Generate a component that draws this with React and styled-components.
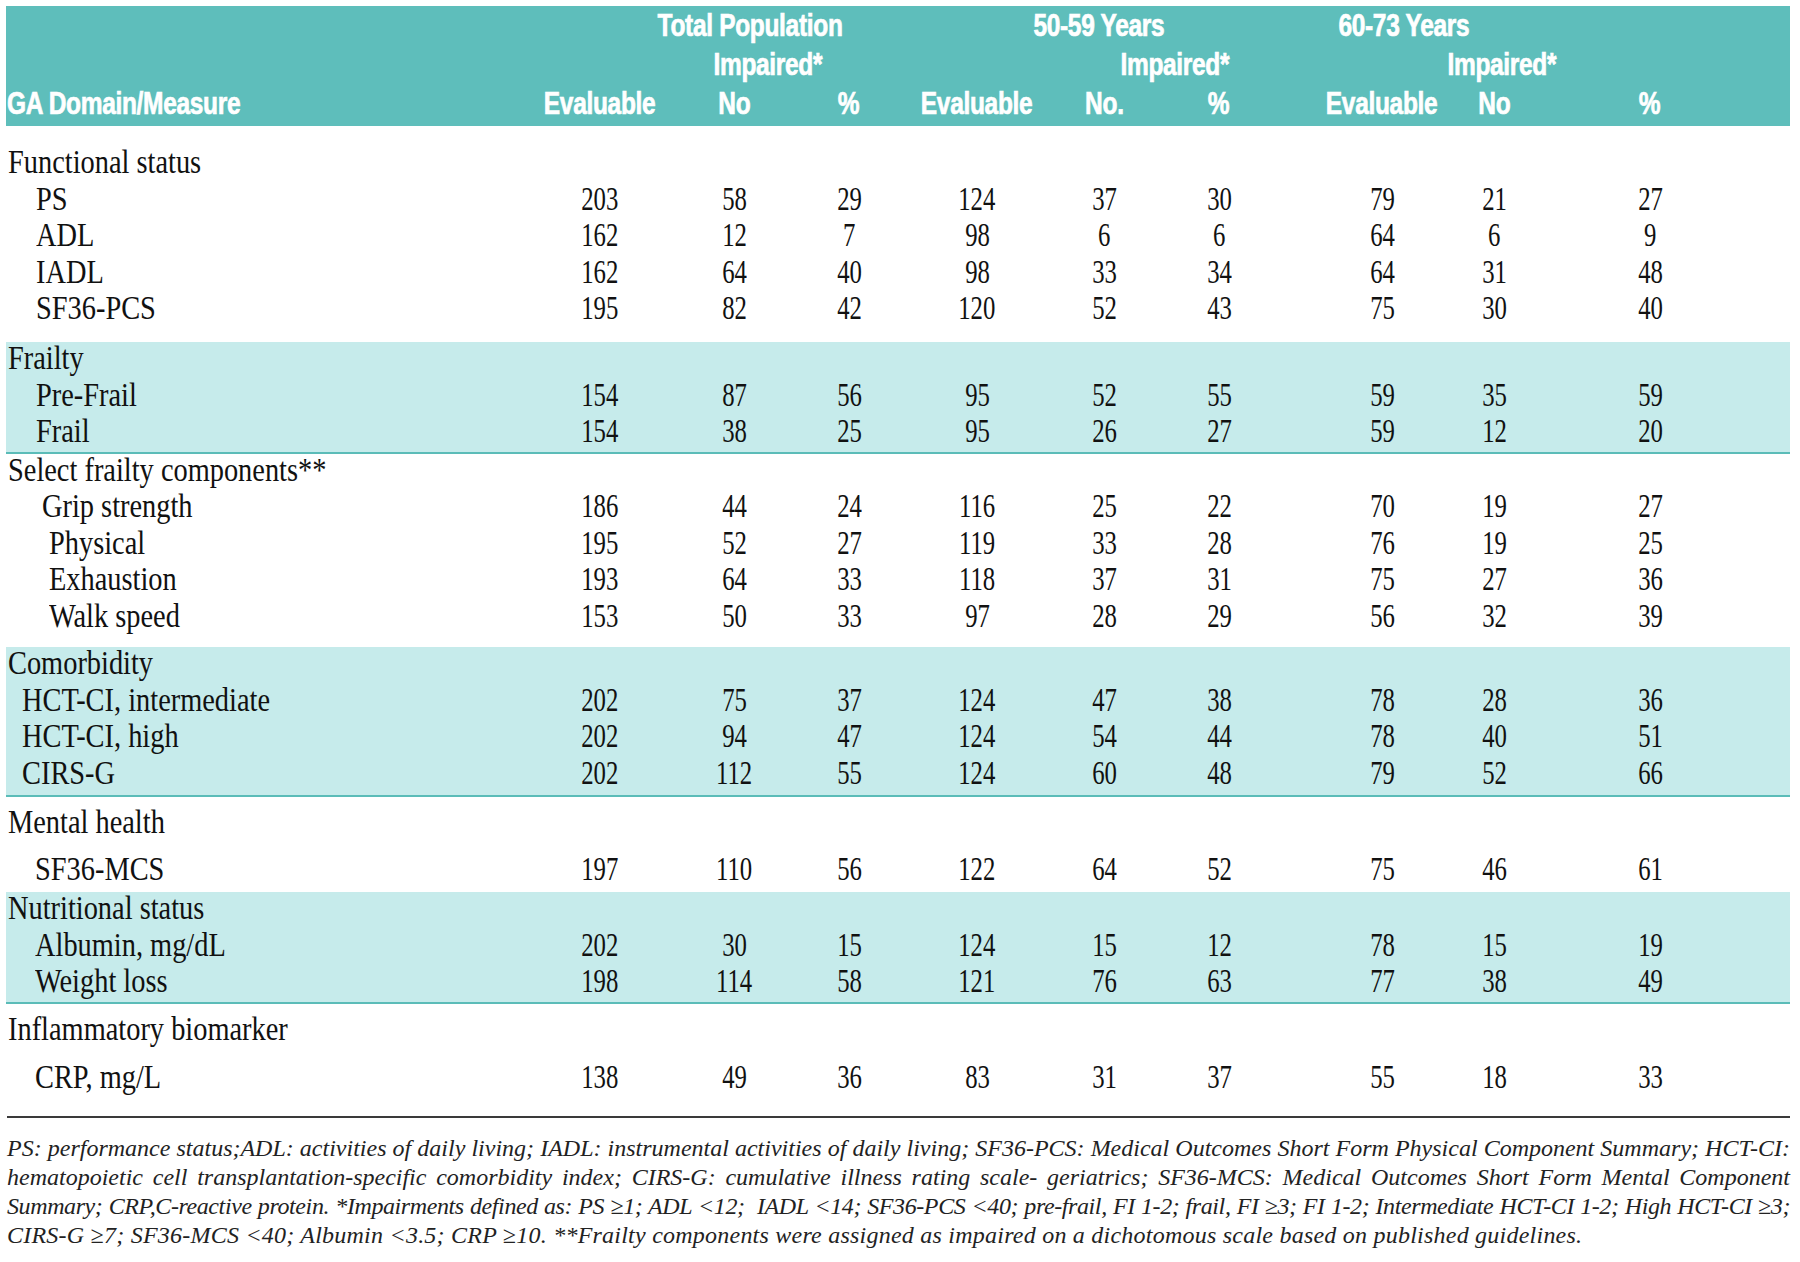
import React from "react";
import styled, { createGlobalStyle } from "styled-components";

const GlobalStyle = createGlobalStyle`
  html, body {
    margin: 0;
    padding: 0;
    background: #ffffff;
  }
`;

// column tracks chosen so each numeric column is centred where the printed table has it
const COLS = "534px 120px 148px 82px 174px 80px 150px 176px 48px 264px 1fr";

const groups = [
  {
    title: "Functional status",
    pt: 20,
    pb: 13.5,
    rows: [
      ["PS", 30, [203, 58, 29, 124, 37, 30, 79, 21, 27]],
      ["ADL", 30, [162, 12, 7, 98, 6, 6, 64, 6, 9]],
      ["IADL", 30, [162, 64, 40, 98, 33, 34, 64, 31, 48]],
      ["SF36-PCS", 30, [195, 82, 42, 120, 52, 43, 75, 30, 40]],
    ],
  },
  {
    title: "Frailty",
    band: true,
    rows: [
      ["Pre-Frail", 30, [154, 87, 56, 95, 52, 55, 59, 35, 59]],
      ["Frail", 30, [154, 38, 25, 95, 26, 27, 59, 12, 20]],
    ],
  },
  {
    title: "Select frailty components**",
    pb: 11,
    rows: [
      ["Grip strength", 36, [186, 44, 24, 116, 25, 22, 70, 19, 27]],
      ["Physical", 43, [195, 52, 27, 119, 33, 28, 76, 19, 25]],
      ["Exhaustion", 43, [193, 64, 33, 118, 37, 31, 75, 27, 36]],
      ["Walk speed", 43, [153, 50, 33, 97, 28, 29, 56, 32, 39]],
    ],
  },
  {
    title: "Comorbidity",
    band: true,
    pb: 2,
    rows: [
      ["HCT-CI, intermediate", 16, [202, 75, 37, 124, 47, 38, 78, 28, 36]],
      ["HCT-CI, high", 16, [202, 94, 47, 124, 54, 44, 78, 40, 51]],
      ["CIRS-G", 16, [202, 112, 55, 124, 60, 48, 79, 52, 66]],
    ],
  },
  {
    title: "Mental health",
    pt: 9,
    pb: 2.5,
    gap: 10.5,
    rows: [["SF36-MCS", 29, [197, 110, 56, 122, 64, 52, 75, 46, 61]]],
  },
  {
    title: "Nutritional status",
    band: true,
    rows: [
      ["Albumin, mg/dL", 29, [202, 30, 15, 124, 15, 12, 78, 15, 19]],
      ["Weight loss", 29, [198, 114, 58, 121, 76, 63, 77, 38, 49]],
    ],
  },
  {
    title: "Inflammatory biomarker",
    pt: 9.5,
    pb: 18.5,
    gap: 11.5,
    rows: [["CRP, mg/L", 29, [138, 49, 36, 83, 31, 37, 55, 18, 33]]],
  },
];

// each printed line of the note, with a little tracking to match its printed length
const footLines = [
  { text: "PS: performance status;ADL: activities of daily living; IADL: instrumental activities of daily living; SF36-PCS: Medical Outcomes Short Form Physical Component Summary; HCT-CI:", ls: 0 },
  { text: "hematopoietic cell transplantation-specific comorbidity index; CIRS-G: cumulative illness rating scale- geriatrics; SF36-MCS: Medical Outcomes Short Form Mental Component", ls: 0 },
  { text: "Summary; CRP,C-reactive protein. *Impairments defined as: PS \u22651; ADL <12;\u00a0 IADL <14; SF36-PCS <40; pre-frail, FI 1-2; frail, FI \u22653; FI 1-2; Intermediate HCT-CI 1-2; High HCT-CI \u22653;", ls: -0.4 },
  { text: "CIRS-G \u22657; SF36-MCS <40; Albumin <3.5; CRP \u226510. **Frailty components were assigned as impaired on a dichotomous scale based on published guidelines.", ls: 0.23, last: true },
];

function App() {
  return (
    <Page>
      <GlobalStyle />
      <Header>
        <HeadCell $col="2 / span 3" $shift={35}><HeadText>Total Population</HeadText></HeadCell>
        <HeadCell $col="5 / span 3" $shift={7}><HeadText>50-59 Years</HeadText></HeadCell>
        <HeadCell $col="8 / span 2" $shift={-2}><HeadText>60-73 Years</HeadText></HeadCell>

        <HeadCell $col="3 / span 2" $shift={-7}><HeadText>Impaired*</HeadText></HeadCell>
        <HeadCell $col="6 / span 2" $shift={-4}><HeadText>Impaired*</HeadText></HeadCell>
        <HeadCell $col="9 / span 1" $shift={8}><HeadText>Impaired*</HeadText></HeadCell>

        <HeadCell $col="1" $left><HeadText $left>GA Domain/Measure</HeadText></HeadCell>
        {["Evaluable", "No", "%", "Evaluable", "No.", "%", "Evaluable", "No", "%"].map((h, i) => (
          <HeadCell key={i} $col={`${i + 2}`}><HeadText>{h}</HeadText></HeadCell>
        ))}
      </Header>

      {groups.map((g) => (
        <Group key={g.title} $band={g.band} $pt={g.pt || 0} $pb={g.pb || 0}>
          <Row>
            <Label $indent={2}><LabelText>{g.title}</LabelText></Label>
          </Row>
          {g.rows.map(([name, indent, values], idx) => (
            <Row key={name} $gap={idx === 0 ? g.gap || 0 : 0}>
              <Label $indent={indent}><LabelText>{name}</LabelText></Label>
              {values.map((v, i) => (
                <Num key={i}><NumText>{v}</NumText></Num>
              ))}
            </Row>
          ))}
        </Group>
      ))}

      <Rule />

      <Footnote>
        {footLines.map((line, i) => (
          <FootLine key={i} $last={line.last} $ls={line.ls}>{line.text}</FootLine>
        ))}
      </Footnote>
    </Page>
  );
}

const Page = styled.div`
  padding: 6px 10px 20px 6px;
  color: #111;
`;

const Header = styled.div`
  display: grid;
  grid-template-columns: ${COLS};
  grid-auto-rows: 39px;
  padding-bottom: 3px;
  background: #5ebebb;
  color: #ffffff;
`;

const HeadCell = styled.div`
  grid-column: ${(p) => p.$col};
  display: flex;
  justify-content: ${(p) => (p.$left ? "flex-start" : "center")};
  padding-left: ${(p) => (p.$left ? 1 : Math.max(0, (p.$shift || 0) * 2))}px;
  padding-right: ${(p) => Math.max(0, -(p.$shift || 0) * 2)}px;
  white-space: nowrap;
`;

const HeadText = styled.span`
  display: inline-block;
  font-family: "Liberation Sans", Arial, sans-serif;
  font-weight: 700;
  font-size: 31px;
  line-height: 39px;
  letter-spacing: -0.4px;
  -webkit-text-stroke: 0.7px #ffffff;
  transform: scaleX(0.79);
  transform-origin: ${(p) => (p.$left ? "left" : "center")};
`;

const Group = styled.div`
  padding-top: ${(p) => p.$pt}px;
  padding-bottom: ${(p) => p.$pb}px;
  background: ${(p) => (p.$band ? "#c6ebeb" : "transparent")};
  border-bottom: ${(p) => (p.$band ? "2px solid #5bbcb8" : "none")};
`;

const Row = styled.div`
  display: grid;
  grid-template-columns: ${COLS};
  height: 36.5px;
  margin-top: ${(p) => p.$gap || 0}px;
  font-family: "Liberation Serif", "Times New Roman", serif;
  font-size: 33px;
  line-height: 32px;
  white-space: nowrap;
`;

const Label = styled.div`
  padding-left: ${(p) => p.$indent}px;
`;

const LabelText = styled.span`
  display: inline-block;
  transform: scaleX(0.86);
  transform-origin: left;
`;

const Num = styled.div`
  display: flex;
  justify-content: center;
`;

const NumText = styled.span`
  display: inline-block;
  transform: scaleX(0.75);
`;

const Rule = styled.div`
  height: 2px;
  margin-left: 1px;
  background: #3a3a3a;
`;

const Footnote = styled.div`
  margin-top: 15.5px;
  padding-left: 1px;
  font-family: "Liberation Serif", "Times New Roman", serif;
  font-style: italic;
  font-size: 24px;
  line-height: 29px;
  color: #222;
`;

const FootLine = styled.div`
  text-align: ${(p) => (p.$last ? "left" : "justify")};
  text-align-last: ${(p) => (p.$last ? "left" : "justify")};
  letter-spacing: ${(p) => p.$ls}px;
  white-space: nowrap;
`;

export default App;
